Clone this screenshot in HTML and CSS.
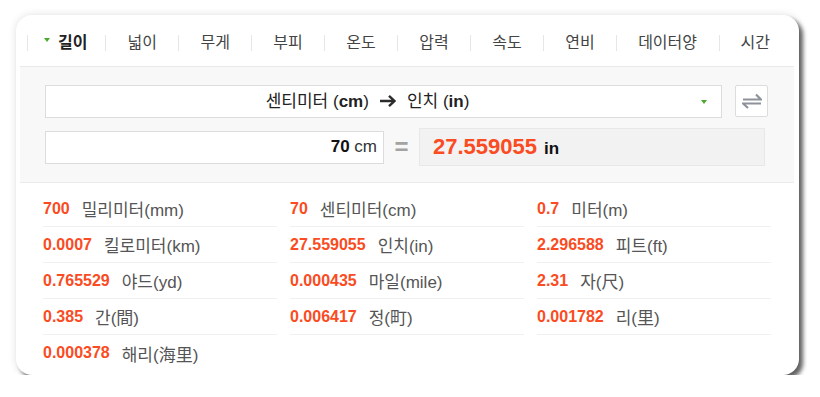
FILE: index.html
```
<!DOCTYPE html>
<html lang="ko">
<head>
<meta charset="utf-8">
<title>단위 변환</title>
<link rel="stylesheet" href="styles.css">
</head>
<body>
<div class="card">
  <div class="tabs">
    <span class="tab on">길이</span>
    <span class="tab">넓이</span>
    <span class="tab">무게</span>
    <span class="tab">부피</span>
    <span class="tab">온도</span>
    <span class="tab">압력</span>
    <span class="tab">속도</span>
    <span class="tab">연비</span>
    <span class="tab">데이터양</span>
    <span class="tab">시간</span>
  </div>

  <div class="conv">
    <div class="select-row">
      <div class="select">
        <span class="select-text">센티미터 (<b>cm</b>)<svg class="arrow" width="18" height="14" viewBox="0 0 18 14"><path d="M1 7H15.5M10 1.8L15.5 7L10 12.2" stroke="#2b2b2b" stroke-width="2.4" fill="none"/></svg>인치 (<b>in</b>)</span>
        <span class="caret"></span>
      </div>
      <div class="swap">
        <svg width="20" height="16" viewBox="0 0 20 16"><path d="M1 6.5H19L14 1.5M19 10.5H1L6 15" stroke="#8e929b" stroke-width="2.2" fill="none"/></svg>
      </div>
    </div>
    <div class="calc-row">
      <div class="input"><b>70</b>&nbsp;cm</div>
      <div class="eq">=</div>
      <div class="result"><span class="big">27.559055</span><span class="unit">in</span></div>
    </div>
  </div>

  <div class="list">
    <div class="col">
      <div class="item"><span class="num">700</span><span class="lbl">밀리미터(mm)</span></div>
      <div class="item"><span class="num">0.0007</span><span class="lbl">킬로미터(km)</span></div>
      <div class="item"><span class="num">0.765529</span><span class="lbl">야드(yd)</span></div>
      <div class="item"><span class="num">0.385</span><span class="lbl">간(間)</span></div>
      <div class="item last"><span class="num">0.000378</span><span class="lbl">해리(海里)</span></div>
    </div>
    <div class="col">
      <div class="item"><span class="num">70</span><span class="lbl">센티미터(cm)</span></div>
      <div class="item"><span class="num">27.559055</span><span class="lbl">인치(in)</span></div>
      <div class="item"><span class="num">0.000435</span><span class="lbl">마일(mile)</span></div>
      <div class="item"><span class="num">0.006417</span><span class="lbl">정(町)</span></div>
    </div>
    <div class="col">
      <div class="item"><span class="num">0.7</span><span class="lbl">미터(m)</span></div>
      <div class="item"><span class="num">2.296588</span><span class="lbl">피트(ft)</span></div>
      <div class="item"><span class="num">2.31</span><span class="lbl">자(尺)</span></div>
      <div class="item"><span class="num">0.001782</span><span class="lbl">리(里)</span></div>
    </div>
  </div>
</div>
</body>
</html>
```

FILE: styles.css
```
* {
    box-sizing: border-box;
}
html, body {
    margin: 0;
    background: #fff;
}
body {
    padding: 15px 0 0 16px;
    font-family: "Liberation Sans", "Noto Sans CJK KR", sans-serif;
    color: #333;
}

.card {
    width: 783px;
    height: 360px;
    padding: 0 5px 0 4px;
    background: #fff;
    border-radius: 16px;
    box-shadow: 4px 4px 4px rgba(0,0,0,0.6), 0 0 9px rgba(0,0,0,0.12);
    overflow: hidden;
}

/* tabs */
.tabs {
    display: flex;
    align-items: center;
    height: 52px;
    padding: 5px 0 0 7px;
    border-bottom: 1px solid #e9e9e9;
    overflow: hidden;
}
.tab {
    flex-shrink: 0;
    display: flex;
    align-items: center;
    height: 16px;
    padding: 0 21.5px 0 21px;
    border-left: 1px solid #e6e6e6;
    font-size: 16px;
    line-height: 16px;
    white-space: nowrap;
    color: #444;
}
.tab.on {
    padding: 0 18px 0 16px;
    font-weight: bold;
    color: #222;
}
.tab.on:before {
    content: "";
    align-self: flex-start;
    margin: 3px 8px 0 0;
    border-left: 3.5px solid transparent;
    border-right: 3.5px solid transparent;
    border-top: 4px solid #4ca82a;
}

/* converter */
.conv {
    height: 116px;
    padding: 18px 26px 0 25px;
    background: #f8f8f8;
    border-bottom: 1px solid #ebebeb;
}
.select-row {
    display: flex;
    gap: 13px;
}
.select {
    flex: 1;
    display: flex;
    align-items: center;
    height: 33px;
    background: #fff;
    border: 1px solid #dcdcdc;
    font-size: 17px;
    color: #222;
}
.select-text {
    flex: 1;
    text-align: center;
    line-height: 20px;
}
.arrow {
    margin: 0 10px;
    vertical-align: -1px;
}
.caret {
    margin: 0 14px 0 12px;
    border-left: 3.5px solid transparent;
    border-right: 3.5px solid transparent;
    border-top: 4px solid #4ca82a;
}
.swap {
    display: flex;
    align-items: center;
    justify-content: center;
    width: 33px;
    height: 32px;
    background: #fff;
    border: 1px solid #dcdcdc;
    border-radius: 2px;
}

.calc-row {
    display: flex;
    align-items: center;
    height: 38px;
    margin-top: 10px;
    padding-right: 3px;
}
.input {
    flex: 1;
    display: flex;
    align-items: center;
    justify-content: flex-end;
    height: 33px;
    padding-right: 6px;
    background: #fff;
    border: 1px solid #dcdcdc;
    font-size: 17px;
    color: #333;
}
.input b {
    color: #111;
}
.eq {
    width: 35px;
    text-align: center;
    font-size: 24px;
    font-weight: bold;
    color: #a3a3a3;
}
.result {
    flex: 1;
    display: flex;
    align-items: baseline;
    height: 38px;
    padding: 5px 0 0 13px;
    background: #f2f2f2;
    border: 1px solid #e8e8e8;
}
.big {
    font-size: 22px;
    font-weight: bold;
    color: #fa4b22;
}
.unit {
    margin-left: 7px;
    font-size: 17px;
    font-weight: bold;
    color: #111;
}

/* result list */
.list {
    display: grid;
    grid-template-columns: 234px 234px 234px;
    column-gap: 13px;
    padding: 8px 0 0 23px;
}
.item {
    display: flex;
    align-items: center;
    height: 36px;
    border-bottom: 1px solid #f0f0f0;
}
.item.last {
    border-bottom: 0;
}
.num {
    margin-right: 12px;
    font-size: 16px;
    font-weight: bold;
    color: #fa4b22;
}
.lbl {
    font-size: 17px;
    color: #555;
}
```
